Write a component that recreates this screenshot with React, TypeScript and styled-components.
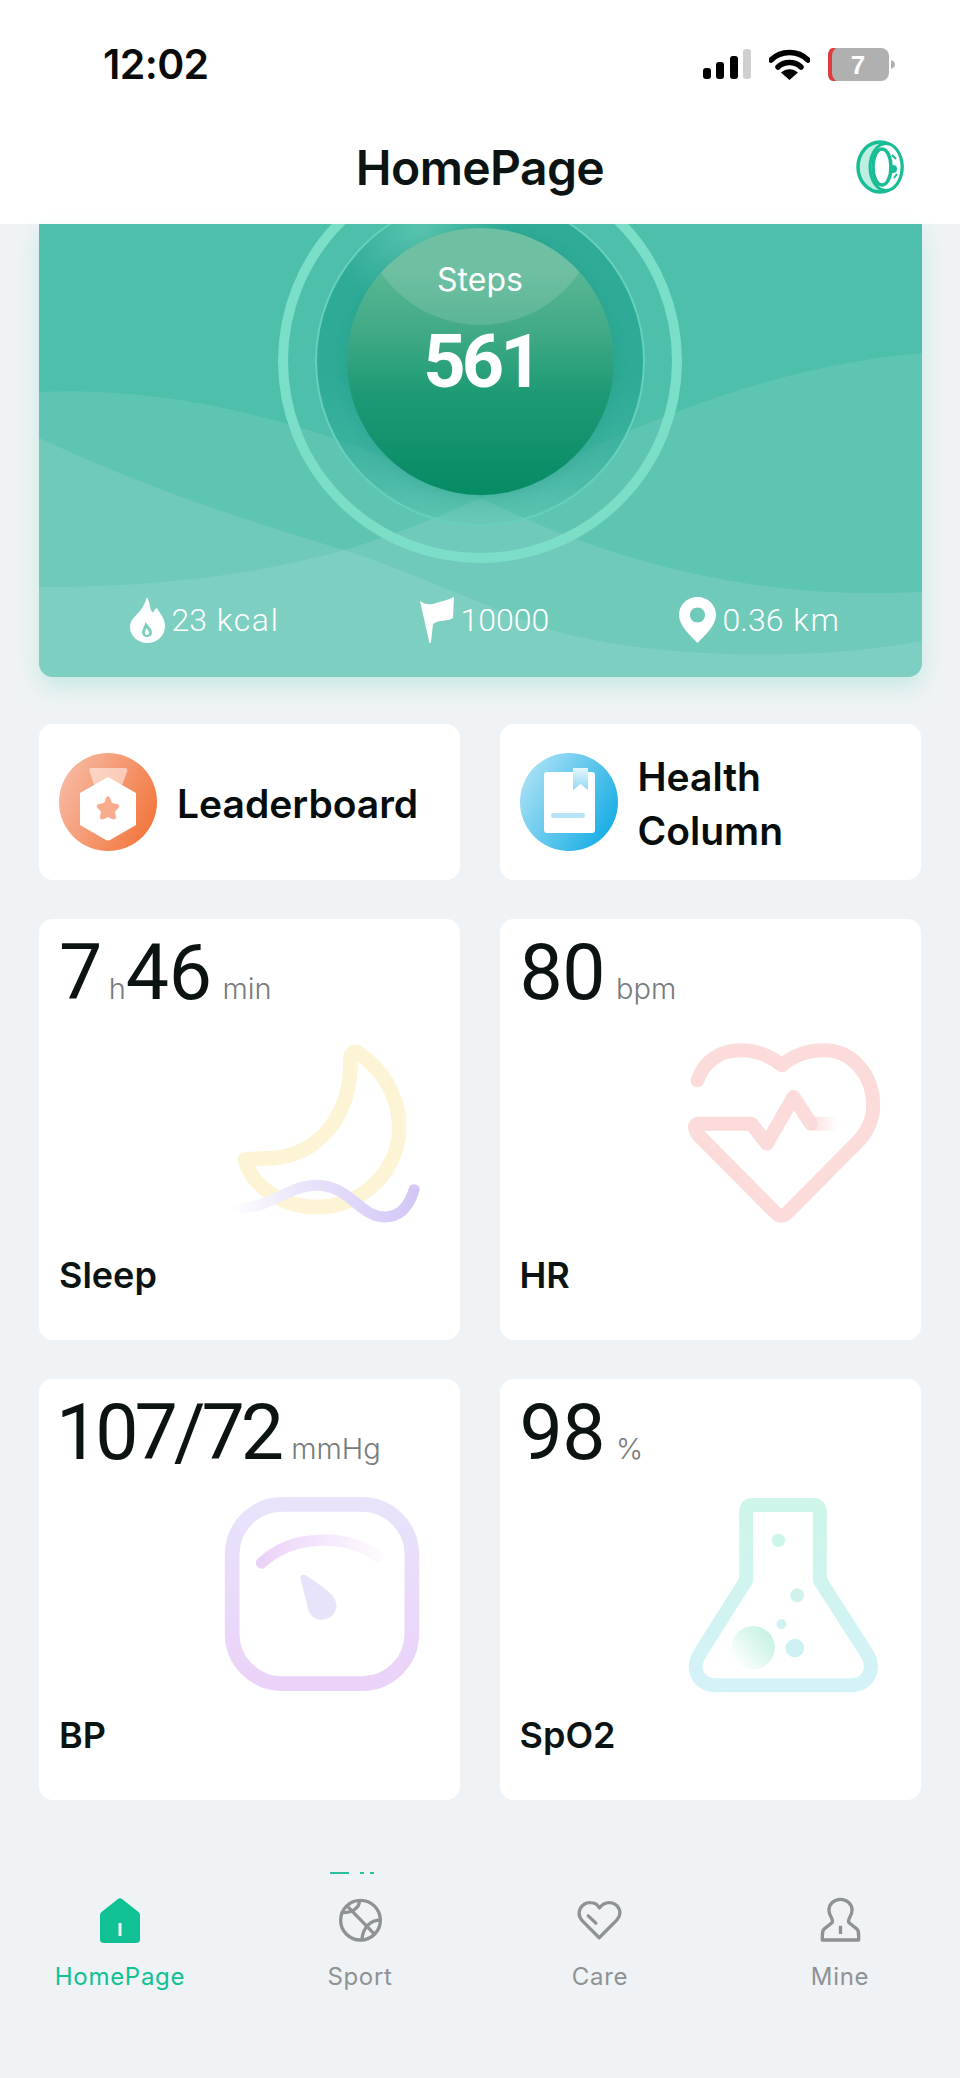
import React from "react";
import styled, { createGlobalStyle } from "styled-components";

const GlobalStyle = createGlobalStyle`
  html, body {
    margin: 0;
    padding: 0;
    background: #eff3f5;
  }
  * {
    box-sizing: border-box;
  }
`;

const Page = styled.div`
  width: 960px;
  height: 2078px;
  overflow: hidden;
  background: #eff3f5;
  font-family: Inter, "Liberation Sans", sans-serif;
  color: #0b1413;
`;

const Header = styled.header`
  height: 224px;
  background: #fff;
`;

const StatusBar = styled.div`
  height: 128px;
  display: flex;
  align-items: center;
  justify-content: space-between;
  padding: 0 65px 0 103px;
`;

const Clock = styled.span`
  font-size: 41px;
  font-weight: 600;
  letter-spacing: -0.6px;
  color: #0a0a0a;
`;

const StatusIcons = styled.div`
  display: flex;
  align-items: center;
  gap: 18px;
`;

const NavBar = styled.div`
  height: 78px;
  display: grid;
  grid-template-columns: 1fr auto 1fr;
  align-items: center;
`;

const Title = styled.h1`
  grid-column: 2;
  margin: 0;
  font-size: 48px;
  font-weight: 600;
  letter-spacing: -0.6px;
  color: #0b1413;
`;

const RingLogo = styled.svg`
  justify-self: end;
  margin-right: 56px;
`;

const Hero = styled.section`
  position: relative;
  width: 883px;
  height: 453px;
  margin: 0 auto;
  overflow: hidden;
  background: #4dbfab;
  border-radius: 0 0 14px 14px;
`;

const HeroShadow = styled.div`
  width: 883px;
  margin: 0 auto;
  border-radius: 0 0 14px 14px;
  box-shadow: 0 10px 22px rgba(96, 208, 184, 0.28);
`;

const Waves = styled.svg`
  position: absolute;
  inset: 0;
`;

const HeroContent = styled.div`
  position: relative;
  height: 100%;
  display: flex;
  flex-direction: column;
  align-items: center;
`;

const OuterRing = styled.div`
  flex: none;
  width: 404px;
  height: 404px;
  margin-top: -65px;
  display: flex;
  align-items: center;
  justify-content: center;
  border: 10px solid #7bdfc8;
  border-radius: 50%;
`;

const InnerDisc = styled.div`
  width: 330px;
  height: 330px;
  display: flex;
  align-items: center;
  justify-content: center;
  border: 2px solid #66d1bb;
  border-radius: 50%;
  background:
    radial-gradient(circle at 32% 10%, rgba(130, 220, 200, 0.5), rgba(130, 220, 200, 0) 24%),
    linear-gradient(
      180deg,
      #2fab97 0%,
      #2dab96 55%,
      rgba(45, 168, 148, 0.55) 80%,
      rgba(70, 185, 165, 0.1) 100%
    );
`;

const Ball = styled.div`
  position: relative;
  flex: none;
  width: 267px;
  height: 267px;
  overflow: hidden;
  display: flex;
  flex-direction: column;
  align-items: center;
  border-radius: 50%;
  color: #fff;
  background: linear-gradient(180deg, #5ab795 15%, #3fa985 40%, #1d9a75 62%, #068b65 100%);
  box-shadow: 0 2px 14px rgba(10, 120, 100, 0.15);

  &::before {
    content: "";
    position: absolute;
    left: 13px;
    top: -143px;
    width: 240px;
    height: 240px;
    border-radius: 50%;
    background: rgba(255, 255, 255, 0.13);
  }
`;

const StepsLabel = styled.span`
  position: relative;
  margin-top: 32px;
  font-size: 32px;
  line-height: 40px;
  font-weight: 400;
`;

const StepsValue = styled.span`
  position: relative;
  margin-top: 20px;
  padding-left: 2px;
  font-family: Roboto, sans-serif;
  font-size: 74px;
  line-height: 84px;
  font-weight: 700;
  letter-spacing: -4px;
`;

const Stats = styled.div`
  flex: none;
  width: 100%;
  margin-top: 34px;
  display: grid;
  grid-template-columns: 290px 259px 1fr;
  padding-left: 91px;
`;

const Stat = styled.div`
  display: flex;
  align-items: center;
  gap: 7px;
  height: 46px;
  font-family: Roboto, sans-serif;
  font-size: 32px;
  font-weight: 300;
  color: #fff;
`;

const StatUnit = styled.span`
  margin-left: 2px;
  letter-spacing: 1.6px;
`;

const Grid = styled.main`
  display: grid;
  grid-template-columns: 421px 421px;
  column-gap: 39.5px;
  row-gap: 39px;
  padding: 47px 39px 0;
`;

const Tile = styled.div`
  height: 156px;
  display: flex;
  align-items: center;
  gap: 20px;
  padding-left: 20px;
  background: #fff;
  border-radius: 14px;
`;

const TileText = styled.span`
  margin-top: 4px;
  font-size: 39px;
  line-height: 54px;
  font-weight: 600;
  color: #060d0c;
`;

const Metric = styled.div`
  position: relative;
  height: 421px;
  display: flex;
  flex-direction: column;
  padding: 10px 20px 44px;
  background: #fff;
  border-radius: 14px;
`;

const Reading = styled.div`
  display: flex;
  align-items: baseline;
`;

const Value = styled.span<{ $long?: boolean }>`
  margin-left: ${(p) => (p.$long ? "-3px" : "0")};
  font-family: Roboto, sans-serif;
  font-size: 77px;
  line-height: 88px;
  font-weight: 400;
  letter-spacing: ${(p) => (p.$long ? "-4px" : "-0.5px")};
  color: #0b1413;
`;

const Unit = styled.span<{ $tight?: boolean }>`
  margin-left: ${(p) => (p.$tight ? "7px" : "11px")};
  font-size: 29px;
  font-weight: 300;
  color: #777b7c;
`;

const MetricLabel = styled.span`
  margin-top: auto;
  font-size: 36px;
  line-height: 42px;
  font-weight: 600;
  color: #0b1413;
`;

const Artwork = styled.svg`
  position: absolute;
  right: 30px;
  top: 118px;
`;

const TabArea = styled.nav`
  padding-top: 72px;
`;

const EditPeek = styled.div`
  height: 2px;
  display: flex;
  gap: 6px;
  margin-left: 330px;
`;

const PeekBar = styled.i<{ $width: number }>`
  width: ${(p) => p.$width}px;
  height: 2px;
  background: #2cbf9f;
  margin-right: ${(p) => (p.$width > 6 ? "5px" : "0")};
`;

const TabBar = styled.div`
  display: grid;
  grid-template-columns: repeat(4, 240px);
  padding-top: 23px;
`;

const Tab = styled.div<{ $active?: boolean }>`
  display: flex;
  flex-direction: column;
  align-items: center;
  color: ${(p) => (p.$active ? "#10c193" : "#8e9294")};
`;

const TabIcon = styled.div`
  height: 46px;
  display: flex;
  align-items: center;
  justify-content: center;
`;

const TabLabel = styled.span`
  margin-top: 19px;
  font-size: 24px;
  line-height: 30px;
  font-weight: 400;
  letter-spacing: 0.7px;
`;

const SignalIcon = () => (
  <svg width="48" height="30" viewBox="0 0 48 30">
    <rect x="0" y="19" width="8" height="11" rx="3" fill="#000" />
    <rect x="13" y="13" width="8" height="17" rx="3" fill="#000" />
    <rect x="27" y="7" width="8" height="23" rx="3" fill="#000" />
    <rect x="40" y="0" width="8" height="30" rx="3" fill="#cfcfcf" />
  </svg>
);

const WifiIcon = () => (
  <svg width="41" height="31" viewBox="0 0 41 31">
    <path d="M2 11C12 1 29 1 39 11" fill="none" stroke="#000" strokeWidth="5.5" strokeLinecap="round" />
    <path d="M9 18C15 12 26 12 32 18" fill="none" stroke="#000" strokeWidth="5.5" strokeLinecap="round" />
    <path d="M12 23.5C17 19 24 19 29 23.5L20.5 31Z" fill="#000" />
  </svg>
);

const BatteryIcon = () => (
  <svg width="67" height="33" viewBox="0 0 67 33">
    <rect x="0" y="0" width="61" height="33" rx="8" fill="#b0b0b0" />
    <path d="M8 0H5C2 0 0 3 0 8V25C0 30 2 33 5 33H8C5 30 4 28 4 25V8C4 5 5 2 8 0Z" fill="#dc3c3c" />
    <path d="M63 12C66 13 67 15 67 16.500C67 18 66 20 63 21Z" fill="#b0b0b0" />
    <text x="30" y="26" textAnchor="middle" fontFamily="Liberation Sans, sans-serif" fontSize="26" fontWeight="700" fill="#fff">
      7
    </text>
  </svg>
);

const FlameIcon = () => (
  <svg width="35" height="46" viewBox="0 0 35 46">
    <path
      d="M17 0C21 8 19 12 23 16C24 13 25 12 27 11C30 17 35 21 35 29C35 39 27 46 17.500 46C8 46 0 39 0 30C0 22 6 19 10 14C13 10 15 6 17 0Z"
      fill="#fff"
    />
    <path d="M15.500 25C19 30 22 32 22 35.500C22 38.500 19.500 40 17 40C14 40 12 38 12 35.500C12 32 14.500 30 15.500 25Z" fill="#7fcdbc" />
    <path d="M16.500 31C18 33 19 34.500 19 35.500C19 37 18 38 16.800 38C15.500 38 15 37 15 35.500C15 34.500 15.500 33 16.500 31Z" fill="#fff" />
  </svg>
);

const FlagIcon = () => (
  <svg width="34" height="46" viewBox="0 0 34 46">
    <path d="M0 4C6 8 10 8 16 6C22 4 28 3 34 0L33 21C27 25 20 22 13 27L11 45C10 47 9 46 9 44L5 26Z" fill="#fff" />
  </svg>
);

const PinIcon = () => (
  <svg width="37" height="46" viewBox="0 0 37 46">
    <path
      fillRule="evenodd"
      d="M18.500 0C29 0 37 8 37 18C37 29 25 39 18.500 46C12 39 0 29 0 18C0 8 8 0 18.500 0ZM18.500 10.500C14 10.500 11 14 11 18C11 22 14 25.500 18.500 25.500C23 25.500 26 22 26 18C26 14 23 10.500 18.500 10.500Z"
      fill="#fff"
    />
  </svg>
);

const BadgeIcon = () => (
  <svg width="98" height="100" viewBox="0 0 98 100">
    <defs>
      <linearGradient id="badgeBg" x1="0" y1="0.2" x2="1" y2="0.7">
        <stop offset="0" stopColor="#f7bba5" />
        <stop offset="1" stopColor="#f2763d" />
      </linearGradient>
    </defs>
    <circle cx="49" cy="50" r="49" fill="url(#badgeBg)" />
    <path d="M32 16H66C68 16 69 18 68 20L62 36H36L31 20C30 18 30 16 32 16Z" fill="#fff" fillOpacity="0.5" />
    <path d="M49 25L77 41V73L51 88C50 88.500 48 88.500 47 88L21 73V41Z" fill="#fff" strokeLinejoin="round" />
    <path
      d="M49 44C50 44 51 45 52 49L53 51L58 52C61 53 60.500 55 59 56.500L56 59.500L57 65C57 67.500 55 68 53 67L49 65L45 67C43 68 41 67.500 41 65L42 59.500L39 56.500C37.500 55 37 53 40 52L45 51L46 49C47 45 48 44 49 44Z"
      fill="#f9ab8e"
    />
  </svg>
);

const BookIcon = () => (
  <svg width="98" height="100" viewBox="0 0 98 100">
    <defs>
      <linearGradient id="bookBg" x1="0" y1="0.15" x2="1" y2="0.75">
        <stop offset="0" stopColor="#b1e3f6" />
        <stop offset="1" stopColor="#14ace4" />
      </linearGradient>
      <linearGradient id="bookmark" x1="0" y1="0" x2="0" y2="1">
        <stop offset="0" stopColor="#e6f7fc" />
        <stop offset="1" stopColor="#8fd8f1" />
      </linearGradient>
    </defs>
    <circle cx="49" cy="50" r="49" fill="url(#bookBg)" />
    <rect x="24" y="20" width="51" height="61" rx="3" fill="#fff" />
    <path d="M53 16H68V38L60.500 32L53 38Z" fill="url(#bookmark)" />
    <rect x="31" y="61" width="34" height="5" rx="2.500" fill="#b7e4f6" />
  </svg>
);

const MoonArt = () => (
  <Artwork width="207" height="200" viewBox="580 380 620 600">
    <defs>
      <linearGradient id="waveFade" gradientUnits="userSpaceOnUse" x1="600" y1="0" x2="1160" y2="0">
        <stop offset="0" stopColor="#fff" />
        <stop offset="0.35" stopColor="#ece6fb" />
        <stop offset="1" stopColor="#d3c6f6" />
      </linearGradient>
    </defs>
    <path
      d="M962 445C965 600 880 745 700 745L645 747C665 830 760 890 860 890C1000 890 1108 780 1108 650C1108 550 1050 470 985 428C970 420 962 430 962 445Z"
      fill="none"
      stroke="#fdf3d5"
      strokeWidth="44"
      strokeLinejoin="round"
    />
    <path
      d="M610 893C720 900 770 825 860 825C960 825 990 920 1065 920C1115 920 1140 880 1153 838"
      fill="none"
      stroke="url(#waveFade)"
      strokeWidth="33"
      strokeLinecap="round"
    />
  </Artwork>
);

const HeartArt = () => (
  <Artwork width="207" height="200" viewBox="580 380 620 600">
    <defs>
      <linearGradient id="pulseFade" gradientUnits="userSpaceOnUse" x1="940" y1="0" x2="1045" y2="0">
        <stop offset="0" stopColor="#fad9d8" />
        <stop offset="1" stopColor="#fad9d8" stopOpacity="0" />
      </linearGradient>
    </defs>
    <path
      d="M620 510C640 450 690 420 750 420C800 420 845 440 873 465C905 438 945 420 1000 420C1085 420 1147 495 1147 585C1147 640 1120 680 1075 720L892 905C878 920 865 920 852 905L628 680C612 662 605 640 625 640H782L828 700L908 560L960 640"
      fill="none"
      stroke="#fbdcdb"
      strokeWidth="42"
      strokeLinecap="round"
      strokeLinejoin="round"
    />
    <path d="M955 640H1045" fill="none" stroke="url(#pulseFade)" strokeWidth="42" />
  </Artwork>
);

const GaugeArt = () => (
  <Artwork width="207" height="200" viewBox="580 380 620 600">
    <defs>
      <linearGradient id="gaugeFrame" x1="0" y1="0" x2="0" y2="1">
        <stop offset="0" stopColor="#e8e3fb" />
        <stop offset="1" stopColor="#ebd2f8" />
      </linearGradient>
      <linearGradient id="gaugeArc" gradientUnits="userSpaceOnUse" x1="690" y1="0" x2="1050" y2="0">
        <stop offset="0" stopColor="#ebd2f8" />
        <stop offset="1" stopColor="#ebd2f8" stopOpacity="0.1" />
      </linearGradient>
    </defs>
    <rect x="607" y="402" width="539" height="538" rx="150" fill="none" stroke="url(#gaugeFrame)" strokeWidth="44" />
    <path d="M695 578C790 490 950 490 1045 560" fill="none" stroke="url(#gaugeArc)" strokeWidth="34" strokeLinecap="round" />
    <path d="M812 625C812 610 822 610 835 620C880 650 920 675 920 705C920 730 900 748 875 748C850 748 838 730 835 715Z" fill="#e6e3fa" />
  </Artwork>
);

const FlaskArt = () => (
  <Artwork width="207" height="200" viewBox="580 380 620 600">
    <defs>
      <linearGradient id="flaskLine" x1="0" y1="0" x2="0" y2="1">
        <stop offset="0" stopColor="#cdf5e9" />
        <stop offset="1" stopColor="#d4f2f8" />
      </linearGradient>
      <linearGradient id="flaskBubble" x1="0.1" y1="0.9" x2="0.9" y2="0.2">
        <stop offset="0" stopColor="#fff" />
        <stop offset="1" stopColor="#c6f2e2" />
      </linearGradient>
    </defs>
    <path
      d="M766 630V425C766 412 772 404 785 404H968C981 404 987 412 987 425V630L1125 845C1160 900 1130 945 1075 945H680C625 945 595 900 630 845Z"
      fill="none"
      stroke="url(#flaskLine)"
      strokeWidth="42"
      strokeLinejoin="round"
    />
    <circle cx="863" cy="510" r="20" fill="#ccf5e9" />
    <circle cx="919" cy="675" r="21" fill="#cff3ec" />
    <circle cx="872" cy="762" r="15" fill="#cff3f1" />
    <circle cx="912" cy="833" r="28" fill="#cdf1f3" />
    <circle cx="787" cy="832" r="65" fill="url(#flaskBubble)" />
  </Artwork>
);

const HomeIcon = () => (
  <svg width="40" height="45" viewBox="0 0 40 45">
    <path d="M18 1C19 0 21 0 22 1L38.500 14C39.500 15 40 16 40 17V42C40 44 38 45 36 45H4C2 45 0 44 0 42V17C0 16 0.500 15 1.500 14Z" fill="#10c193" />
    <rect x="18.500" y="25" width="3" height="13" fill="#eff3f5" />
  </svg>
);

const SportIcon = () => (
  <svg width="45" height="45" viewBox="50 108 136 136">
    <g fill="none" stroke="#8e9294" strokeWidth="10">
      <circle cx="118" cy="175" r="60" />
      <path d="M80 135L158 215" />
      <path d="M115 115C115 140 90 155 58 152" />
      <path d="M178 175C150 175 125 195 122 235" />
    </g>
  </svg>
);

const CareIcon = () => (
  <svg width="48" height="42" viewBox="770 112 145 125">
    <g fill="none" stroke="#8e9294" strokeWidth="10" strokeLinejoin="round" strokeLinecap="round">
      <path d="M840 228L790 178C765 150 790 120 815 122C825 122 835 128 841 138C848 128 858 122 870 122C895 122 915 150 893 175Z" />
      <path d="M807 162L830 184" />
    </g>
  </svg>
);

const MineIcon = () => (
  <svg width="43" height="48" viewBox="55 35 130 145">
    <g fill="none" stroke="#8e9294" strokeWidth="10" strokeLinejoin="round">
      <path d="M120 45C100 45 85 60 85 78C85 95 100 105 95 115L70 135C65 140 65 145 65 168H175C175 145 175 140 170 135L145 115C140 105 155 95 155 78C155 60 140 45 120 45Z" />
      <path d="M120 125V150" />
    </g>
  </svg>
);

const metrics = [
  { label: "Sleep", art: <MoonArt />, parts: [["7", "h"], ["46", "min"]] },
  { label: "HR", art: <HeartArt />, parts: [["80", "bpm"]] },
  { label: "BP", art: <GaugeArt />, parts: [["107/72", "mmHg"]] },
  { label: "SpO2", art: <FlaskArt />, parts: [["98", "%"]] },
];

const tabs = [
  { label: "HomePage", icon: <HomeIcon />, active: true },
  { label: "Sport", icon: <SportIcon /> },
  { label: "Care", icon: <CareIcon /> },
  { label: "Mine", icon: <MineIcon /> },
];

export default function App() {
  return (
    <Page>
      <GlobalStyle />
      <Header>
        <StatusBar>
          <Clock>12:02</Clock>
          <StatusIcons>
            <SignalIcon />
            <WifiIcon />
            <BatteryIcon />
          </StatusIcons>
        </StatusBar>
        <NavBar>
          <Title>HomePage</Title>
          <RingLogo width="48" height="54" viewBox="0 0 48 54">
            <ellipse cx="24" cy="27" rx="22" ry="25" fill="#bdeee0" stroke="#18bd96" strokeWidth="3.500" />
            <ellipse cx="30" cy="27" rx="16" ry="23.500" fill="#fff" stroke="#18bd96" strokeWidth="3" />
            <ellipse cx="26" cy="27" rx="9" ry="18" fill="#fff" stroke="#18bd96" strokeWidth="3.500" />
            <circle cx="37" cy="29" r="4" fill="#18bd96" />
            <path d="M36 15L40 19M38 38L41 34" stroke="#18bd96" strokeWidth="2" />
          </RingLogo>
        </NavBar>
      </Header>

      <HeroShadow>
        <Hero>
          <Waves width="883" height="453" viewBox="0 0 883 453">
            <path d="M0 363C120 363 220 350 305 326C480 276 640 150 883 129V453H0Z" fill="#fff" fillOpacity="0.1" />
            <path d="M0 168C160 160 320 215 452 279C600 350 740 375 883 368V453H0Z" fill="#fff" fillOpacity="0.1" />
            <path d="M0 214C120 270 220 300 305 326C380 350 450 385 513 406C600 432 760 440 883 417V453H0Z" fill="#fff" fillOpacity="0.1" />
          </Waves>
          <HeroContent>
            <OuterRing>
              <InnerDisc>
                <Ball>
                  <StepsLabel>Steps</StepsLabel>
                  <StepsValue>561</StepsValue>
                </Ball>
              </InnerDisc>
            </OuterRing>
            <Stats>
              <Stat>
                <FlameIcon />
                <span>
                  23 <StatUnit>kcal</StatUnit>
                </span>
              </Stat>
              <Stat>
                <FlagIcon />
                10000
              </Stat>
              <Stat>
                <PinIcon />
                <span>
                  0.36 <StatUnit>km</StatUnit>
                </span>
              </Stat>
            </Stats>
          </HeroContent>
        </Hero>
      </HeroShadow>

      <Grid>
        <Tile>
          <BadgeIcon />
          <TileText>Leaderboard</TileText>
        </Tile>
        <Tile>
          <BookIcon />
          <TileText>
            Health
            <br />
            Column
          </TileText>
        </Tile>
        {metrics.map((m) => (
          <Metric key={m.label}>
            <Reading>
              {m.parts.map(([value, unit], i) => (
                <React.Fragment key={unit}>
                  <Value $long={value.length > 3}>{value}</Value>
                  <Unit $tight={i < m.parts.length - 1}>{unit}</Unit>
                </React.Fragment>
              ))}
            </Reading>
            {m.art}
            <MetricLabel>{m.label}</MetricLabel>
          </Metric>
        ))}
      </Grid>

      <TabArea>
        <EditPeek>
          <PeekBar $width={19} />
          <PeekBar $width={4} />
          <PeekBar $width={4} />
        </EditPeek>
        <TabBar>
          {tabs.map((t) => (
            <Tab key={t.label} $active={t.active}>
              <TabIcon>{t.icon}</TabIcon>
              <TabLabel>{t.label}</TabLabel>
            </Tab>
          ))}
        </TabBar>
      </TabArea>
    </Page>
  );
}
